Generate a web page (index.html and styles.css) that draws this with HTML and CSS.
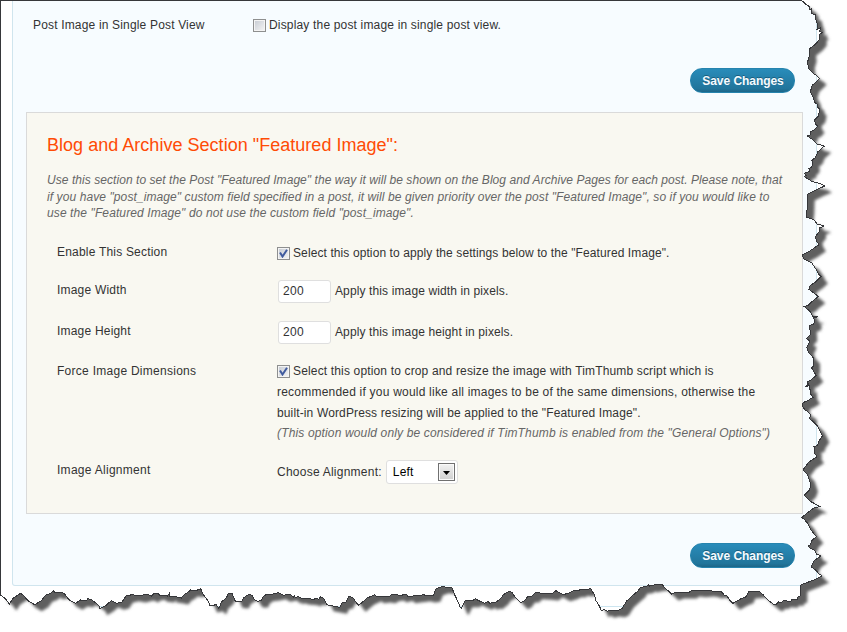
FILE: index.html
```html
<!DOCTYPE html>
<html lang="en">
<head>
<meta charset="utf-8">
<title>Featured Image Options</title>
<link rel="stylesheet" href="styles.css">
</head>
<body>
<main class="panel">
  <div class="single-row">
    <div class="label">Post Image in Single Post View</div>
    <label class="check-line"><span class="check"></span><span class="t-display">Display the post image in single post view.</span></label>
  </div>
  <div class="actions"><button class="save">Save Changes</button></div>
  <section class="box">
    <h2>Blog and Archive Section "Featured Image":</h2>
    <p class="intro"><span class="i1">Use this section to set the Post "Featured Image" the way it will be shown on the Blog and Archive Pages for each post. Please note, that</span><br><span class="i2">if you have "post_image" custom field specified in a post, it will be given priority over the post "Featured Image", so if you would like to</span><br><span class="i3">use the "Featured Image" do not use the custom field "post_image".</span></p>
    <div class="row r-enable">
      <div class="label">Enable This Section</div>
      <label class="check-line"><span class="check"><svg viewBox="0 0 9 9"><path d="M1 3.5 3.5 7.5 8 .8"/></svg></span><span class="t-enable">Select this option to apply the settings below to the "Featured Image".</span></label>
    </div>
    <div class="row r-width">
      <div class="label">Image Width</div>
      <div class="field"><input value="200"><span class="t-size">Apply this image width in pixels.</span></div>
    </div>
    <div class="row r-height">
      <div class="label">Image Height</div>
      <div class="field"><input value="200"><span class="t-size">Apply this image height in pixels.</span></div>
    </div>
    <div class="row r-force">
      <div class="label">Force Image Dimensions</div>
      <div class="desc">
        <label class="check-line"><span class="check"><svg viewBox="0 0 9 9"><path d="M1 3.5 3.5 7.5 8 .8"/></svg></span><span class="f1">Select this option to crop and resize the image with TimThumb script which is</span></label>
        <span class="f2">recommended if you would like all images to be of the same dimensions, otherwise the</span><br>
        <span class="f3">built-in WordPress resizing will be applied to the "Featured Image".</span><br>
        <em class="f4">(This option would only be considered if TimThumb is enabled from the "General Options")</em>
      </div>
    </div>
    <div class="row r-align">
      <div class="label">Image Alignment</div>
      <div class="field"><span class="t-align">Choose Alignment:</span><span class="select">Left<span class="arrow"><svg viewBox="0 0 7 4"><path d="M0 0h7L3.5 4z"/></svg></span></span></div>
    </div>
  </section>
  <div class="actions bottom"><button class="save">Save Changes</button></div>
</main>
<div class="next-panel"></div>
<svg class="torn" width="847" height="632" viewBox="0 0 847 632" aria-hidden="true">
  <defs>
    <clipPath id="outside"><path id="outer" clip-rule="evenodd"/></clipPath>
    <filter id="soft" x="-5%" y="-5%" width="110%" height="110%"><feGaussianBlur stdDeviation="1.7"/></filter>
  </defs>
  <g clip-path="url(#outside)">
    <rect width="847" height="632" fill="#fff"/>
    <path id="shadow" transform="translate(7 6.5)" fill="#5f5f5f" filter="url(#soft)"/>
  </g>
  <path id="edge" fill="none" stroke="#36373a" stroke-width="1" shape-rendering="crispEdges"/>
</svg>
<script src="torn.js"></script>
</body>
</html>
```
FILE: styles.css
```css
* { box-sizing: border-box; }
body {
  margin: 0;
  width: 847px;
  height: 632px;
  overflow: hidden;
  background: #fff;
  color: #333;
  font: 12px/16px "Liberation Sans", Arial, sans-serif;
}
.panel {
  width: 805px;
  height: 586px;
  margin-left: 12px;
  padding: 0 13px;
  background: #f7fcff;
  border: 1px solid #d0e5ee;
  border-top: 0;
  border-radius: 0 0 3px 3px;
}
.next-panel {
  width: 805px;
  height: 26px;
  margin: 20px 0 0 12px;
  border: 1px solid #cce5f0;
}
.label { letter-spacing: .2px; }
.single-row { display: flex; padding: 17px 0 0 7px; height: 68px; }
.single-row .label { width: 220px; letter-spacing: .17px; }
.check-line { display: flex; align-items: center; height: 16px; white-space: nowrap; }
.check {
  flex: none;
  width: 13px;
  height: 13px;
  margin: 0 3px 0 0;
  padding: 1px;
  border: 1px solid #8e8f8f;
  background: linear-gradient(135deg, #c5cad2, #f6f6f6);
  box-shadow: inset 0 0 0 1px #f4f4f4;
}
.check svg { display: block; width: 9px; height: 9px; fill: none; stroke: #405b9e; stroke-width: 2; }
.t-display { letter-spacing: .17px; }
.t-enable { letter-spacing: .1px; }
.t-size { letter-spacing: .12px; margin-top: -2px; }
.t-align { letter-spacing: .24px; }
.actions { display: flex; justify-content: flex-end; height: 44px; padding-right: 8px; }
.save {
  width: 105px;
  height: 25px;
  padding: 1px 0 0 1px;
  border: 1px solid #2684ae;
  border-radius: 12px;
  background: linear-gradient(#298cba, #21759b 85%, #1d6688);
  color: #f5fbff;
  font: bold 12px/23px "Liberation Sans", Arial, sans-serif;
  letter-spacing: -.05px;
  text-shadow: 0 -1px 0 rgba(0, 0, 0, .3);
}
.box {
  width: 777px;
  height: 402px;
  padding: 21px 20px 0;
  background: #f9f8f1;
  border: 1px solid #dadada;
}
.bottom { padding-top: 29px; height: 60px; }
h2 { margin: 0; height: 38px; font-size: 18px; line-height: 22px; font-weight: normal; letter-spacing: .025px; color: #ff4b05; }
.intro { margin: 0; height: 72px; line-height: 16.5px; font-style: italic; color: #666; white-space: nowrap; }
.i1 { letter-spacing: .058px; }
.i2 { letter-spacing: .094px; }
.i3 { letter-spacing: .106px; }
.row { display: flex; padding-left: 10px; white-space: nowrap; }
.row .label { width: 220px; flex: none; }
.r-enable { height: 35px; }
.r-enable .check-line { margin-top: 1px; }
.r-width, .r-height { height: 41px; }
.r-width .label, .r-height .label { padding-top: 3px; }
.field { display: flex; align-items: center; height: 24px; }
.r-width .field, .r-height .field { padding: 1px 0 0 1px; }
input {
  width: 53px;
  height: 23px;
  margin: 0 4px 0 0;
  padding: 0 4px 1px;
  border: 1px solid #dfdfdf;
  border-radius: 3px;
  background: #fff;
  color: #333;
  font: 12px "Liberation Sans", Arial, sans-serif;
  letter-spacing: .33px;
}
.r-force { height: 98px; padding-top: 2px; }
.r-force .label { letter-spacing: .27px; }
.desc { line-height: 20.7px; }
.desc .check-line { height: 20px; margin-top: -2px; padding-bottom: 0; margin-bottom: 1px; }
.desc em { color: #666; }
.f1 { letter-spacing: .155px; }
.f2 { letter-spacing: .215px; }
.f3 { letter-spacing: .135px; }
.f4 { letter-spacing: .15px; }
.r-align .label { padding-top: 3px; letter-spacing: .28px; }
.r-align .field { margin-top: 1px; }
.select {
  display: flex;
  align-items: center;
  justify-content: space-between;
  width: 72px;
  height: 24px;
  margin-left: 4px;
  padding: 0 2px 0 6px;
  border: 1px solid #dfdfdf;
  border-radius: 3px;
  background: #fff;
  color: #000;
  letter-spacing: .2px;
}
.arrow {
  display: flex;
  align-items: center;
  justify-content: center;
  width: 17px;
  height: 18px;
  border: 1px solid #707070;
  box-shadow: inset 0 0 0 1px #fafafa;
  background: linear-gradient(#f2f2f2, #cfcfcf);
}
.arrow svg { width: 7px; height: 4px; margin-top: 2px; }
.torn { position: absolute; left: 0; top: 0; }
```
FILE: torn.js
```js
// Outline of the torn sheet, in thirds of a pixel, listed per stretch with its origin.
const stretches = [
  [2301, 0, "102,2 110,6 118,14 128,20 128,28 134,26 134,40 144,44 144,50 152,75 150,88 160,84 158,94 166,98 158,102 158,118 146,132 126,148 128,165 122,185 124,204 136,218 148,226 158,235 136,256 130,275 140,295 142,306 150,312 152,322 158,328 154,348 142,360 146,372 152,378 142,390 130,396 132,404 121,408 136,418 150,432 172,438 152,456 146,472 134,482 138,490 134,502 126,506 128,514 112,520 118,526 112,530 136,545 158,550 174,558 150,568 122,582 121,620 118,650"],
  [2301, 630, "120,22 142,30 150,42 172,48 156,54 156,66 145,80 148,92 156,104 130,122 106,135 110,146 134,158 142,170 150,182 154,192 162,200 148,214 128,228 126,238 142,250 154,260 136,274 124,286 112,290 130,305 136,318 152,320 138,324 144,330 140,342 128,346 130,374 118,386 128,392 124,404 119,412 124,426 138,442 138,470 134,474 142,488 148,496 132,510 120,516 124,522 116,530 128,526 130,550 138,562 122,572 108,578 107,590 114,600 124,606 130,614 128,626 140,636 150,646"],
  [2301, 1260, "158,30 166,48 154,66 152,76 140,80 144,88 142,98 150,110 126,126 108,150 122,165 132,195 126,212 112,226 130,244 152,256 160,260 144,262 130,272 104,292 112,298 122,310 132,330 148,350 134,362 130,374 124,378 128,384 142,390 148,402 162,408 150,416 140,424 132,440 148,452 156,462 166,468 140,480 104,494"],
  [1881, 1710, "520,46 520,78 510,82 510,88 494,88 492,94 470,92 462,98 455,96 446,104 438,102 428,94 412,80 410,74 404,72 398,64 364,66 358,80 342,86 318,100 308,90 300,78 292,76 284,66 272,64 262,66 254,62 240,60 216,62 196,60 188,66 150,66 134,72 114,54 104,42 84,44 68,48 66,44 56,50 40,52 34,62 20,74 0,92"],
  [1260, 1710, "612,106 606,116 594,122 576,120 562,124 552,118 544,122 538,108 528,92 522,72 512,56 494,60 480,58 478,62 462,62 450,68 430,74 418,68 408,62 394,72 372,70 346,68 336,78 324,78 314,92 302,98 288,84 276,68 268,64 250,74 244,84 226,98 220,96 210,100 204,94 194,100 186,96 176,92 166,86 158,92 136,92 124,116 120,110 114,96 104,74 96,54 66,50 48,56 40,76 24,78 10,74 0,76"],
  [630, 1710, "610,78 594,80 590,74 580,74 570,78 560,72 545,74 536,80 520,78 500,80 494,74 472,84 446,106 436,94 428,82 416,80 408,96 396,98 390,112 370,108 350,104 340,84 332,80 326,88 316,84 312,90 300,86 274,84 264,80 256,84 254,76 250,82 240,72 220,76 206,68 188,72 168,74 158,82 154,92 142,94 134,90 126,76 118,72 100,84 98,92 92,96 76,94 66,70 54,72 50,82 44,88 34,96 30,108 26,114 18,104 0,108"],
  [0, 1710, "624,92 610,74 602,56 588,62 572,60 562,68 554,72 544,84 526,80 508,78 508,70 502,78 480,76 474,70 460,72 454,78 440,72 416,78 396,74 378,78 366,96 350,100 334,92 318,106 300,116 296,106 276,90 264,86 260,92 242,90 226,100 208,90 192,70 184,66 166,68 160,62 152,70 136,76 124,92 104,104 84,92 72,78 62,70 40,84 28,102 16,86 6,78 2,76"]
];
const points = ["0.5 0.5"];
stretches.forEach(([ox, oy, list]) => list.split(" ").forEach(pair => {
  const [x, y] = pair.split(",").map(Number);
  points.push(((x + ox) / 3).toFixed(2) + " " + ((y + oy) / 3).toFixed(2));
}));
const outline = "M" + points.join("L") + "Z";
document.getElementById("edge").setAttribute("d", outline);
document.getElementById("shadow").setAttribute("d", outline);
document.getElementById("outer").setAttribute("d", "M0 0H847V632H0Z" + outline);
```
